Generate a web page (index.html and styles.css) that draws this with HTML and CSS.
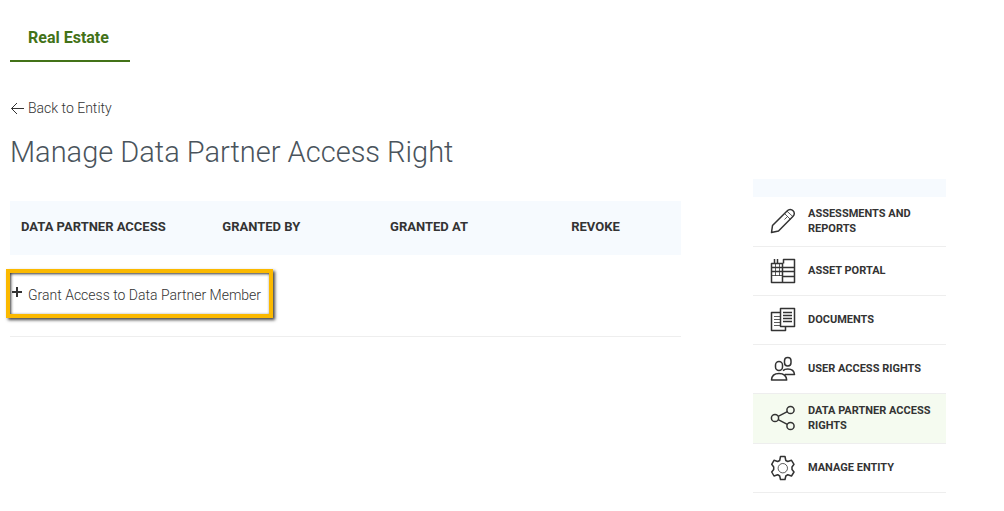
FILE: index.html
```html
<!DOCTYPE html>
<html lang="en">
<head>
<meta charset="utf-8">
<title>Manage Data Partner Access Right</title>
<link rel="stylesheet" href="styles.css">
</head>
<body>
<nav class="tabs" aria-label="Sectors">
  <a class="tab" href="#" aria-current="page">Real Estate</a>
</nav>
<div class="layout">
  <main class="main">
    <a class="back" href="#"><svg class="back-icon" viewBox="0 0 14 14" aria-hidden="true"><path d="M14 7.500H1.500M7 2L1.500 7.500l5.500 5.500"/></svg>Back to Entity</a>
    <h1 class="title">Manage Data Partner Access Right</h1>
    <table class="access">
      <colgroup><col class="col-partner"><col class="col-by"><col class="col-at"><col class="col-revoke"></colgroup>
      <thead>
        <tr><th scope="col">DATA PARTNER ACCESS</th><th scope="col">GRANTED BY</th><th scope="col">GRANTED AT</th><th scope="col">REVOKE</th></tr>
      </thead>
    </table>
    <div class="grant-row">
      <a class="grant" href="#"><svg class="plus-icon" viewBox="0 0 11 11" aria-hidden="true"><path d="M5 0v10M0 5h10"/></svg>Grant Access to Data Partner Member</a>
    </div>
  </main>
  <aside class="sidebar">
    <div class="sidebar-head"></div>
    <nav class="menu" aria-label="Entity">
      <a class="item" href="#">
        <svg class="icon" viewBox="0 0 26 26" aria-hidden="true"><path d="M1.500 24.500l1-7L17.300 2.700a3.900 3.900 0 0 1 5.800 0 3.900 3.900 0 0 1 0 5.600L8.500 23z"/><path class="thin" d="M14.500 5.500l6 6M17 3.200l6 5.500M14.500 11.500l3-3"/></svg>
        <span>ASSESSMENTS AND REPORTS</span></a>
      <a class="item" href="#">
        <svg class="icon" viewBox="0 0 26 26" aria-hidden="true"><path d="M1.500 5.500h11v19h-11zM13.500 5.500v-4h11v23h-12M4.500 1v5M7.500 1v5M12.500 9.500h12M12.500 13.500h12M12.500 18.500h12M1.500 9.500h11M1.500 13.500h11"/><path class="thin" d="M1.500 17.500h11M5.500 6v12M9.500 6v12"/></svg>
        <span>ASSET PORTAL</span></a>
      <a class="item" href="#">
        <svg class="icon" viewBox="0 0 26 26" aria-hidden="true"><path d="M10.500 1.500h14v18h-14zM10.500 5.500h-9v18h14v-4M13 5.500h9M13 8.500h9M13 11.500h9M13 14.500h9"/><path class="thin" d="M4 9.500h6M4 12.500h6M4 15.500h6M4 18.500h6"/></svg>
        <span>DOCUMENTS</span></a>
      <a class="item" href="#">
        <svg class="icon" viewBox="0 0 26 26" aria-hidden="true"><rect x="5.500" y="5.500" width="7" height="9" rx="3.500"/><rect x="14.500" y="1.500" width="6.500" height="8.500" rx="3.200"/><path d="M1.500 24c.2-4.500 3-6.500 7.500-6.500s7.300 2 7.700 6.500zM13 14.600c1.300-1.300 3-1.600 4.800-1.600 4 0 6.400 2 6.700 5.500h-9.700"/></svg>
        <span>USER ACCESS RIGHTS</span></a>
      <a class="item item-active" href="#" aria-current="page">
        <svg class="icon" viewBox="0 0 26 26" aria-hidden="true"><circle cx="5" cy="13" r="3.600"/><circle cx="20.500" cy="5" r="3.600"/><circle cx="20.500" cy="21" r="3.600"/><path d="M8.200 11.300L17.300 6.700M8.200 14.700L17.300 19.300"/></svg>
        <span>DATA PARTNER ACCESS RIGHTS</span></a>
      <a class="item" href="#">
        <svg class="icon" viewBox="0 0 26 26" aria-hidden="true"><path d="M10.500 1.500h4.500l.8 4 2 1 3.700-1.200 2.500 4-2 2.700v2.500l2 2.500-2.500 4-3.700-1.300-2 1.300-.8 3.500h-4.500l-.8-3.500-2-1.300L4 21l-2.300-4 2-2.500V12l-2-2.700 2.300-4 3.700 1.200 2-1z"/><circle class="thin" cx="12.800" cy="13.200" r="4.700"/></svg>
        <span>MANAGE ENTITY</span></a>
    </nav>
  </aside>
</div>
</body>
</html>
```
FILE: styles.css
```css
* { box-sizing: border-box; }
body {
  margin: 0;
  padding: 14px 58px 16px 10px;
  background: #fff;
  color: #333;
  font-family: Roboto, "Liberation Sans", sans-serif;
  font-size: 14px;
  line-height: 20px;
}
a { color: inherit; text-decoration: none; }
.tabs { display: flex; }
.tab {
  min-width: 120px;
  padding: 12px 18px 10px;
  border-bottom: 2px solid #437218;
  color: #437218;
  font-size: 16px;
  font-weight: 700;
  line-height: 24px;
}
.layout {
  display: grid;
  grid-template-columns: minmax(0, 671fr) minmax(0, 193fr);
  column-gap: 72px;
  padding-top: 36px;
}
.back {
  display: inline-flex;
  align-items: center;
  gap: 4px;
  font-weight: 300;
}
.back-icon { width: 14px; height: 14px; fill: none; stroke: #333; stroke-width: 1; }
.title {
  margin: 12px 0 29px;
  color: #4a545c;
  font-size: 29px;
  font-weight: 300;
  line-height: 40px;
}
.access {
  width: 100%;
  table-layout: fixed;
  border-collapse: collapse;
  background: #f6fafe;
}
.col-partner { width: 30%; }
.col-by { width: 25%; }
.col-at { width: 27%; }
.col-revoke { width: 18%; }
.access th {
  padding: 16px 0 18px 11px;
  font-size: 13px;
  font-weight: 700;
  text-align: left;
  white-space: nowrap;
}
.grant-row {
  padding: 28px 0 31px 2px;
  border-bottom: 1px solid #eee;
}
.grant {
  position: relative;
  display: inline-flex;
  align-items: center;
  gap: 5px;
  padding-right: 8px;
  font-weight: 300;
}
.grant::after {
  content: "";
  position: absolute;
  inset: -16px -4px -13px -6px;
  border: 4px solid #fbb900;
  box-shadow: 2px 2px 3px #444, inset 1px 1px 3px #333;
}
.plus-icon { width: 11px; height: 11px; margin-bottom: 4px; fill: none; stroke: #333; stroke-width: 2; }
.sidebar { padding-top: 81px; }
.sidebar-head { height: 18px; background: #f6fafe; }
.item {
  display: flex;
  align-items: center;
  gap: 12px;
  min-height: 49px;
  padding: 9px 8px 10px 17px;
  border-bottom: 1px solid #eee;
  font-size: 11px;
  font-weight: 700;
  line-height: 15px;
}
.item-active { background: #f5fbf0; }
.icon { flex: none; width: 26px; height: 26px; fill: none; stroke: #333; stroke-width: 1.5; stroke-linejoin: round; }
.thin { stroke-width: 0.8; }
```
